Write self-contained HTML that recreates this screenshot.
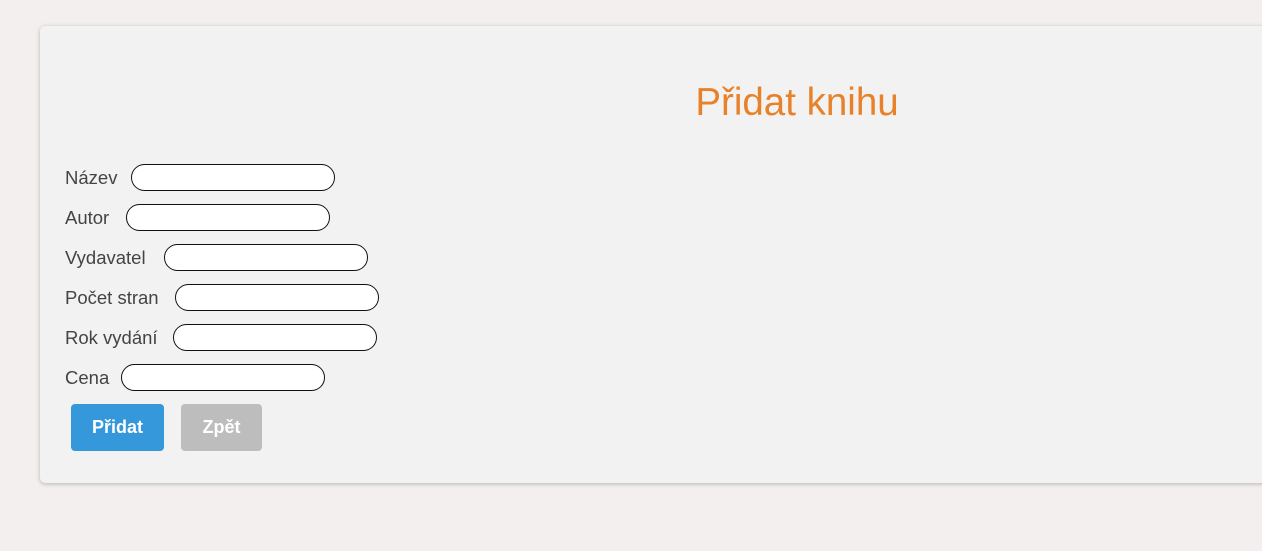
<!DOCTYPE html>
<html><head><meta charset="utf-8"><style>
body{margin:0;width:1262px;height:551px;background:#f3efee;font-family:"Liberation Sans",sans-serif;position:relative;overflow:hidden}
.card{position:absolute;left:40px;top:26px;width:1240px;height:457px;background:#f2f2f2;border-radius:5px;box-shadow:0 1px 4px rgba(0,0,0,.25)}
h1{position:absolute;left:0;top:80px;width:1594px;margin:0;text-align:center;font-weight:normal;font-size:38.5px;color:#e8822a;line-height:46px}
.l{position:absolute;left:65px;font-size:18.5px;color:#444;line-height:27px}
.i{position:absolute;width:202px;height:25px;border:1px solid #111;border-radius:14px;background:#fff}
.b{position:absolute;top:404px;height:47px;border-radius:4px;color:#fff;font-weight:bold;font-size:18px;line-height:47px;text-align:center}
</style></head><body>
<div class="card"></div>
<h1>Přidat knihu</h1>
<div class="l" style="top:164px">Název</div><div class="i" style="left:131px;top:164px"></div>
<div class="l" style="top:204px">Autor</div><div class="i" style="left:126px;top:204px"></div>
<div class="l" style="top:244px">Vydavatel</div><div class="i" style="left:164px;top:244px"></div>
<div class="l" style="top:284px">Počet stran</div><div class="i" style="left:175px;top:284px"></div>
<div class="l" style="top:324px">Rok vydání</div><div class="i" style="left:173px;top:324px"></div>
<div class="l" style="top:364px">Cena</div><div class="i" style="left:121px;top:364px"></div>
<div class="b" style="left:71px;width:93px;background:#3498db">Přidat</div>
<div class="b" style="left:181px;width:81px;background:#bdbdbd">Zpět</div>
</body></html>
